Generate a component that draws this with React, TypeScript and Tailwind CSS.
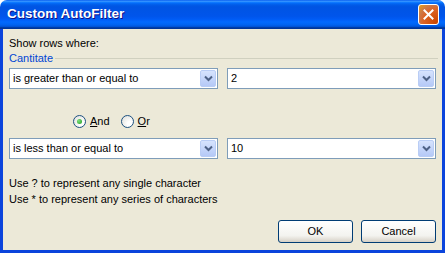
import type { ReactNode } from "react";

const FONT = "font-['Tahoma','Liberation_Sans','DejaVu_Sans',sans-serif]";

function Chevron() {
  return (
    <svg width="9" height="7" viewBox="0 0 9 7" aria-hidden>
      <path d="M1 1.5 L4.5 5 L8 1.5" fill="none" stroke="#4d6185" strokeWidth="2" />
    </svg>
  );
}

function Combo({ value, className }: { value: string; className?: string }) {
  return (
    <div
      className={`flex h-[21px] items-center border border-[#7f9db9] bg-white pl-[3px] pr-[1px] ${className ?? ""}`}
    >
      <span className="flex-1 truncate text-[11px] leading-none text-black">{value}</span>
      <span className="flex h-[17px] w-[16px] items-center justify-center rounded-[2px] border border-[#b9cdf5] bg-[linear-gradient(to_bottom,#d6e3fd,#b5c9f7)]">
        <Chevron />
      </span>
    </div>
  );
}

function Radio({ checked, children }: { checked?: boolean; children: ReactNode }) {
  return (
    <label className="flex items-center gap-[4px]">
      <span className="flex h-[13px] w-[13px] items-center justify-center rounded-full border border-[#1c5180] bg-[radial-gradient(circle_at_70%_70%,#ffffff_20%,#dcdcd6_100%)]">
        {checked && (
          <span className="h-[5px] w-[5px] rounded-full bg-[radial-gradient(circle_at_35%_35%,#7de07d,#1f9b1f)]" />
        )}
      </span>
      <span className="text-[11px] leading-none text-black">{children}</span>
    </label>
  );
}

function XpButton({ children }: { children: ReactNode }) {
  return (
    <button className="flex h-[23px] w-[75px] items-center justify-center rounded-[3px] border border-[#003c74] bg-[linear-gradient(to_bottom,#ffffff,#f3f3ef_70%,#d6d0c5)] text-[11px] text-black">
      {children}
    </button>
  );
}

export default function App() {
  return (
    <div className={`flex h-[253px] w-[445px] flex-col overflow-hidden rounded-t-[7px] ${FONT}`}>
      {/* title bar */}
      <div className="flex h-[29px] items-center justify-between bg-[linear-gradient(to_bottom,#0058ee_0%,#3a93ff_4%,#288eff_6%,#127dff_8%,#036ffc_10%,#0262ee_14%,#0057e5_20%,#0054e3_24%,#0055eb_56%,#005bf5_66%,#026afe_76%,#0062ef_86%,#0052d6_92%,#0040ab_94%,#003092_100%)] pl-[7px] pr-[6px]">
        <span className="font-['Trebuchet_MS','Liberation_Sans',sans-serif] text-[13.5px] font-bold text-white [text-shadow:1px_1px_#0f1089]">
          Custom AutoFilter
        </span>
        <span className="flex h-[21px] w-[21px] items-center justify-center rounded-[3px] border border-white bg-[radial-gradient(circle_at_90%_90%,#cc4600_0%,#dc6527_55%,#cd7546_70%,#e5a01a_100%)]">
          <svg width="11" height="11" viewBox="0 0 11 11" aria-hidden>
            <path d="M1.5 1.5 L9.5 9.5 M9.5 1.5 L1.5 9.5" stroke="white" strokeWidth="2" strokeLinecap="square" />
          </svg>
        </span>
      </div>

      {/* body */}
      <div className="flex flex-1 flex-col border-x-[3px] border-b-[3px] border-[#0b44dc] bg-[#ece9d8] px-[6px] pt-[7px] text-[11px] text-black">
        <div className="h-[15px] leading-[15px]">Show rows where:</div>
        <div className="flex h-[15px] items-center gap-[2px]">
          <span className="leading-[15px] text-[#0046d5]">Cantitate</span>
          <span className="mr-[-2px] h-px flex-1 bg-[#d0d0bf]" />
        </div>

        <div className="mt-[2px] flex gap-[9px]">
          <Combo value="is greater than or equal to" className="w-[209px]" />
          <Combo value="2" className="flex-1" />
        </div>

        <div className="mt-[22px] flex h-[20px] items-center gap-[11px] pl-[64px]">
          <Radio checked>
            <span className="underline">A</span>nd
          </Radio>
          <Radio>
            <span className="underline">O</span>r
          </Radio>
        </div>

        <div className="mt-[7px] flex gap-[9px]">
          <Combo value="is less than or equal to" className="w-[209px]" />
          <Combo value="10" className="flex-1" />
        </div>

        <div className="mt-[16px] leading-[16px]">
          <div>Use ? to represent any single character</div>
          <div>Use * to represent any series of characters</div>
        </div>

        <div className="mt-[13px] flex justify-end gap-[8px]">
          <XpButton>OK</XpButton>
          <XpButton>Cancel</XpButton>
        </div>
      </div>
    </div>
  );
}
